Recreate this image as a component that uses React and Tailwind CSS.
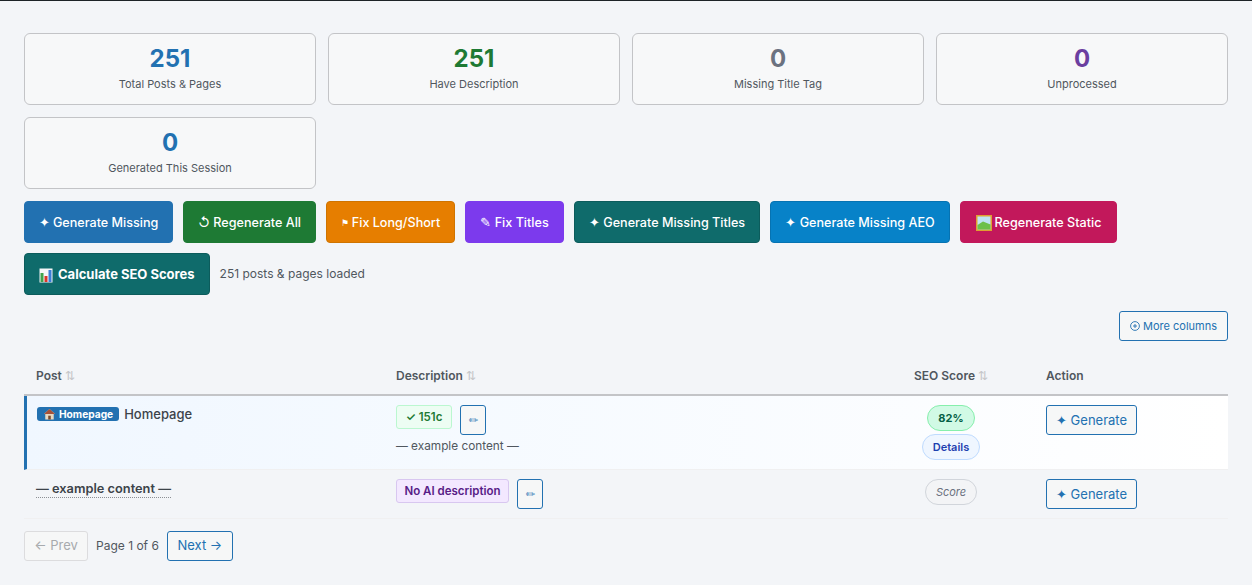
import React from 'react'

const stats = [
  ['251', 'Total Posts & Pages', 'text-[#2271b1]'],
  ['251', 'Have Description', 'text-[#1e7a34]'],
  ['0', 'Missing Title Tag', 'text-[#6b7280]'],
  ['0', 'Unprocessed', 'text-[#6b3fa0]'],
  ['0', 'Generated This Session', 'text-[#2271b1]'],
]

const ChartIcon = () => (
  <svg width="14" height="15" viewBox="0 0 14 15" className="shrink-0">
    <rect x="0.5" y="0.5" width="13" height="14" fill="#f4f6f8" />
    <rect x="1.5" y="5" width="3" height="9" fill="#3fa34d" />
    <rect x="5.5" y="8" width="3" height="6" fill="#d9362b" />
    <rect x="9.5" y="2" width="3" height="12" fill="#3b7dd8" />
  </svg>
)

const PictureIcon = () => (
  <svg width="16" height="16" viewBox="0 0 16 16" className="shrink-0">
    <rect x="0" y="0" width="16" height="16" fill="#e0a030" />
    <rect x="1.5" y="1.5" width="13" height="13" fill="#bfe3f5" />
    <path d="M1.5 10 L7 6.5 L14.5 9.5 V14.5 H1.5 Z" fill="#6cc04a" />
  </svg>
)

const HomeIcon = () => (
  <svg width="11" height="12" viewBox="0 0 13 13" className="shrink-0">
    <path d="M6.5 0.5 L13 6.5 H11.5 V13 H1.5 V6.5 H0 Z" fill="#e8d8c0" />
    <path d="M6.5 0.5 L13 6.5 H0 Z" fill="#a5523a" />
    <rect x="5" y="8.5" width="3" height="4.5" fill="#7a4a2c" />
  </svg>
)

const PlusCircle = () => (
  <svg width="10" height="10" viewBox="0 0 10 10" fill="none" stroke="currentColor" strokeWidth="0.9" className="shrink-0">
    <circle cx="5" cy="5" r="4.4" />
    <path d="M5 3 V7 M3 5 H7" />
  </svg>
)

function ActionButton({ className, children }) {
  return (
    <button className={`h-[42px] pt-[2px] rounded-[4px] border text-white text-[12.6px] font-medium flex items-center whitespace-nowrap ${className}`}>
      {children}
    </button>
  )
}

function SortHead({ children, className = '' }) {
  return (
    <th className={`pt-[11px] pb-[9px] px-3 text-left text-[12px] font-semibold text-[#50575e] border-b-2 border-[#c3c4c7] ${className}`}>
      {children} <span className="text-[12px] font-normal text-[#c3c4c7]">⇅</span>
    </th>
  )
}

function EditButton() {
  return (
    <button className="w-[26px] h-[30px] rounded-[3px] border border-[#2271b1] bg-[#f6f7f7] text-[#2271b1] text-[11px] flex items-center justify-center">
      ✏
    </button>
  )
}

function GenerateButton() {
  return (
    <button className="w-[91px] h-[30px] pt-px rounded-[3px] border border-[#2271b1] bg-[#f6f7f7] text-[#2271b1] text-[13px] whitespace-nowrap">
      ✦ Generate
    </button>
  )
}

export default function App() {
  return (
    <div className="min-h-screen h-[585px] overflow-hidden bg-[#f3f5f8] border-t border-[#1d2327] px-6 pt-8 font-['Inter',sans-serif] text-[#3c434a]">
      <div className="grid grid-cols-[292px_292px_292px_292px] gap-3">
        {stats.map(([value, label, color]) => (
          <div key={label} className="h-[72px] rounded-[6px] border border-[#c3c4c7] bg-[#f7f8f9] flex flex-col items-center pt-[10px]">
            <div className={`text-[24px] leading-[30px] font-bold ${color}`}>{value}</div>
            <div className="text-[11px] leading-[16px] mt-[2px] text-[#50575e]">{label}</div>
          </div>
        ))}
      </div>

      <div className="flex flex-wrap gap-x-[10px] gap-y-[10px] mt-3">
        <ActionButton className="w-[149px] justify-center bg-[#2271b1] border-[#2271b1]">✦ Generate Missing</ActionButton>
        <ActionButton className="w-[133px] justify-center bg-[#1e7a34] border-[#1e7a34]">↺ Regenerate All</ActionButton>
        <ActionButton className="w-[129px] justify-center bg-[#e67e00] border-[#cf7400]"><span className="text-[9px] mr-[3px]">⚑</span>Fix Long/Short</ActionButton>
        <ActionButton className="w-[99px] justify-center bg-[#7c3aed] border-[#7c3aed]">✎ Fix Titles</ActionButton>
        <ActionButton className="w-[186px] justify-center bg-[#0f6b6b] border-[#0c5c5c]">✦ Generate Missing Titles</ActionButton>
        <ActionButton className="w-[180px] justify-center bg-[#0782c8] border-[#0673b2]">✦ Generate Missing AEO</ActionButton>
        <ActionButton className="w-[157px] justify-center gap-[3px] bg-[#c2185b] border-[#c2185b]"><PictureIcon /> Regenerate Static</ActionButton>
        <div className="flex items-center gap-[10px] basis-full">
          <ActionButton className="px-[14px] bg-[#0f6b6b] border-[#0c5c5c] !font-bold !text-[13px] gap-[5px]"><ChartIcon /> Calculate SEO Scores</ActionButton>
          <span className="text-[12px] text-[#50575e]">251 posts &amp; pages loaded</span>
        </div>
      </div>

      <div className="flex justify-end mt-4">
        <button className="h-[30px] px-[10px] rounded-[3px] border border-[#2271b1] bg-[#f6f7f7] text-[#2271b1] text-[11px] flex items-center gap-[3px]">
          <PlusCircle /> More columns
        </button>
      </div>

      <table className="w-[1204px] table-fixed border-separate border-spacing-0 mt-[15px]">
        <colgroup>
          <col className="w-[360px]" />
          <col className="w-[484px]" />
          <col className="w-[166px]" />
          <col className="w-[194px]" />
        </colgroup>
        <thead>
          <tr>
            <SortHead>Post</SortHead>
            <SortHead>Description</SortHead>
            <SortHead className="!text-center">SEO Score</SortHead>
            <th className="pt-[11px] pb-[9px] px-3 text-left text-[12px] font-semibold text-[#50575e] border-b-2 border-[#c3c4c7]">Action</th>
          </tr>
        </thead>
        <tbody>
          <tr className="bg-gradient-to-r from-[#f0f7ff] to-white">
            <td className="align-top pt-[9px] pl-[10px] pr-3 border-l-[3px] border-l-[#2271b1] border-b border-b-[#f0f0f1] h-[74px]">
              <div className="flex items-center gap-[5px] text-[13px] font-medium leading-[18px]">
                <span className="inline-flex items-center gap-1 h-[14px] pl-[7px] pr-[6px] rounded-[3px] bg-[#2271b1] text-white text-[10.2px] font-bold">
                  <HomeIcon /> Homepage
                </span>
                Homepage
              </div>
            </td>
            <td className="align-top pt-[9px] px-3 border-b border-[#f0f0f1]">
              <div className="flex items-start gap-2">
                <span className="h-6 pt-[2px] min-w-[56px] flex items-center justify-center rounded-[3px] border border-[#bbf7d0] bg-[#edfdf3] text-[#1e7a34] text-[11.5px] font-semibold">✓ 151c</span>
                <EditButton />
              </div>
              <div className="text-[11.8px] leading-4 mt-[3px] text-[#50575e]">— example content —</div>
            </td>
            <td className="align-top pt-[9px] px-3 border-b border-[#f0f0f1]">
              <div className="flex flex-col items-center gap-[3px]">
                <span className="h-[26px] px-[10px] flex items-center rounded-full border border-[#86efac] bg-[#d1fae5] text-[#065f46] text-[11px] font-bold">82%</span>
                <span className="h-[26px] px-[10px] flex items-center rounded-full border border-[#bfdbfe] bg-[#eff6ff] text-[#1e40af] text-[11px] font-semibold">Details</span>
              </div>
            </td>
            <td className="align-top pt-[9px] px-3 border-b border-[#f0f0f1]"><GenerateButton /></td>
          </tr>
          <tr>
            <td className="align-top pt-[10px] px-3 h-[49px] border-b border-[#f0f0f1]">
              <span className="block w-fit text-[12.8px] font-semibold leading-[17px] border-b border-dotted border-[#8c8f94]">— example content —</span>
            </td>
            <td className="align-top pt-[9px] px-3 border-b border-[#f0f0f1]">
              <div className="flex items-start gap-2">
                <span className="h-6 w-[113px] pt-px flex items-center justify-center whitespace-nowrap rounded-[3px] border border-[#d8c7f0] bg-[#f3e8ff] text-[#581c87] text-[11.5px] font-semibold">No AI description</span>
                <EditButton />
              </div>
            </td>
            <td className="align-top pt-[9px] px-3 border-b border-[#f0f0f1]">
              <div className="flex justify-center">
                <span className="h-[26px] px-[10px] flex items-center rounded-full border border-[#d1d5db] bg-[#f3f4f6] text-[#6b7280] text-[11px] italic">Score</span>
              </div>
            </td>
            <td className="align-top pt-[9px] px-3 border-b border-[#f0f0f1]"><GenerateButton /></td>
          </tr>
        </tbody>
      </table>

      <div className="flex items-center gap-2 mt-3">
        <button className="h-[30px] w-[64px] rounded-[3px] border border-[#dcdcde] bg-[#f6f7f7] text-[#a7aaad] text-[13px]">← Prev</button>
        <span className="text-[12px] text-[#50575e]">Page 1 of 6</span>
        <button className="h-[30px] w-[66px] rounded-[3px] border border-[#2271b1] bg-[#f6f7f7] text-[#2271b1] text-[13px]">Next →</button>
      </div>
    </div>
  )
}
